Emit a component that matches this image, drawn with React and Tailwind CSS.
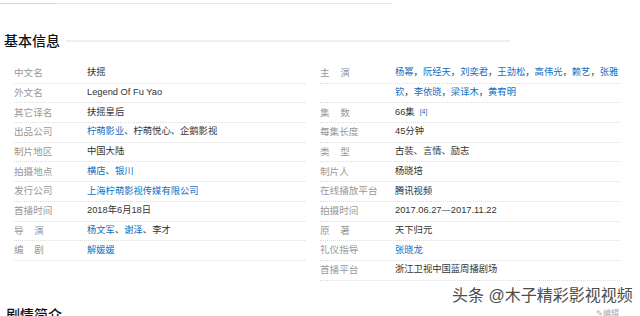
import React from "react";

const L = ({ children }) => <span className="text-[#136ec2]">{children}</span>;

const leftRows = [
  ["中文名", "扶摇"],
  ["外文名", "Legend Of Fu Yao"],
  ["其它译名", "扶摇皇后"],
  ["出品公司", <><L>柠萌影业</L>、柠萌悦心、企鹅影视</>],
  ["制片地区", "中国大陆"],
  ["拍摄地点", <><L>横店</L>、<L>银川</L></>],
  ["发行公司", <L>上海柠萌影视传媒有限公司</L>],
  ["首播时间", "2018年6月18日"],
  ["导\u00a0\u00a0\u00a0\u00a0演", <><L>杨文军</L>、<L>谢泽</L>、李才</>],
  ["编\u00a0\u00a0\u00a0\u00a0剧", <L>解媛媛</L>],
];

const rightRows = [
  ["主\u00a0\u00a0\u00a0\u00a0演", <><L>杨幂</L>，<L>阮经天</L>，<L>刘奕君</L>，<L>王劲松</L>，<L>高伟光</L>，<L>赖艺</L>，<L>张雅</L></>],
  ["", <><L>钦</L>，<L>李依晓</L>，<L>梁译木</L>，<L>黄宥明</L></>],
  ["集\u00a0\u00a0\u00a0\u00a0数", <>66集<sup className="ml-[5px] text-[7px] text-[#136ec2] relative -top-[1px]">[4]</sup></>],
  ["每集长度", "45分钟"],
  ["类\u00a0\u00a0\u00a0\u00a0型", "古装、言情、励志"],
  ["制片人", "杨晓培"],
  ["在线播放平台", "腾讯视频"],
  ["拍摄时间", "2017.06.27—2017.11.22"],
  ["原\u00a0\u00a0\u00a0\u00a0著", "天下归元"],
  ["礼仪指导", <L>张晓龙</L>],
  ["首播平台", "浙江卫视中国蓝周播剧场"],
];

function Row({ label, value, labelW }) {
  return (
    <div className="flex items-center h-[19.7px] border-b border-dotted border-[#dcdcdc]">
      <div className={`${labelW} shrink-0 text-[9.6px] text-[#999] whitespace-nowrap`}>{label}</div>
      <div className="text-[9.3px] text-[#333] whitespace-nowrap">{value}</div>
    </div>
  );
}

export default function App() {
  return (
    <div
      className="relative w-[640px] h-[316px] overflow-hidden bg-white"
      style={{ fontFamily: '"Liberation Sans", "Noto Sans CJK SC", sans-serif' }}
    >
      {/* previous section underline */}
      <div className="mt-[3px] flex h-px w-[392px] bg-[#e8e8e8]">
        <div className="w-[57px] bg-[#d6d6d6]" />
      </div>

      {/* heading */}
      <div className="mt-[28px] flex items-center">
        <h2 className="pl-[4px] text-[14px] font-medium leading-[18px] text-[#111]">基本信息</h2>
        <div className="ml-[6px] h-[2px] w-[444px] bg-[#eeeeee]" />
      </div>

      {/* basic info table */}
      <div className="mt-[14px] flex">
        <div className="ml-[5px] w-[300px] pl-[9px]">
          {leftRows.map(([l, v], i) => (
            <Row key={i} label={l} value={v} labelW="w-[73px]" />
          ))}
        </div>
        <div className="ml-[5px] w-[310px] pl-[10px]">
          {rightRows.map(([l, v], i) => (
            <Row key={i} label={l} value={v} labelW="w-[75px]" />
          ))}
        </div>
      </div>

      {/* next section */}
      <div className="mt-[25px] flex items-center">
        <h2 className="pl-[6px] text-[14px] font-medium leading-[18px] text-[#111]">剧情简介</h2>
      </div>
      <div className="absolute left-[596px] top-[308px] text-[8px] text-[#aaa]">✎编辑</div>

      {/* watermark */}
      <div className="absolute left-[452px] top-[286px] text-[16px] leading-[20px] text-[#4d4d4d] whitespace-nowrap [text-shadow:0_0_2px_#fff]">
        头条 @木子精彩影视视频
      </div>
    </div>
  );
}
